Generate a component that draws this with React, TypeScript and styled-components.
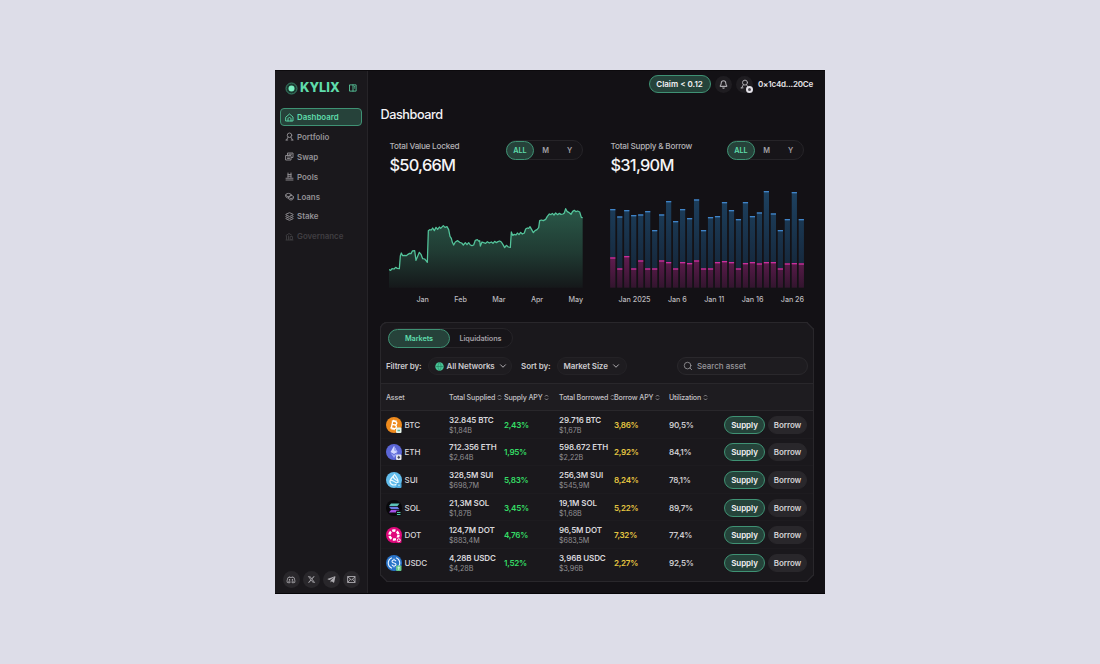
import React from 'react';
import styled, { createGlobalStyle, css } from 'styled-components';
import { Bell, ChevronDown, Layers, Search } from 'lucide-react';
import { RiDiscordLine, RiTwitterXFill } from 'react-icons/ri';
import { FaTelegramPlane } from 'react-icons/fa';

const GlobalStyle = createGlobalStyle`
  * {
    box-sizing: border-box;
  }

  body {
    margin: 0;
    background: #dddde8;
    font-family: Inter, 'Liberation Sans', sans-serif;
    color: #e6e4e8;
  }

  svg {
    display: block;
    flex-shrink: 0;
  }
`;

const Page = styled.div`
  display: flex;
  justify-content: center;
  height: 664px;
  padding-top: 70px;
`;

const Window = styled.div`
  display: flex;
  width: 550px;
  height: 524px;
  background: #131115;
  border-top: 1px solid #0c0a0d;
  border-bottom: 1px solid #060507;
`;

/* ---------- sidebar ---------- */

const Sidebar = styled.aside`
  display: flex;
  flex-direction: column;
  width: 93px;
  padding: 8px 5px 5px;
  background: #1a181c;
  border-right: 1px solid #262428;
`;

const Brand = styled.div`
  display: flex;
  align-items: center;
  height: 18px;
  padding-left: 5px;
  color: #5fdcab;

  svg:last-child {
    margin-left: 9px;
  }
`;

const BrandName = styled.span`
  width: 40px;
  margin-left: 2px;
  font-size: 12.8px;
  font-weight: 800;
  line-height: 18px;
`;

const Nav = styled.nav`
  display: flex;
  flex-direction: column;
  gap: 1.9px;
  margin-top: 11px;
`;

const NavLink = styled.a<{ $active?: boolean; $disabled?: boolean }>`
  display: flex;
  align-items: center;
  gap: 3px;
  width: 82px;
  height: 18px;
  padding-left: 4px;
  border: 1px solid transparent;
  border-radius: 4px;
  font-size: 7.9px;
  font-weight: 600;
  color: #949296;
  ${({ $disabled }) =>
    $disabled &&
    css`
      color: #403e42;
    `}
  ${({ $active }) =>
    $active &&
    css`
      background: #26423a;
      border-color: #3f9274;
      color: #5fdcab;
    `}
`;

const Socials = styled.div`
  display: flex;
  gap: 3px;
  margin-top: auto;
  padding-left: 2.5px;
`;

const RoundButton = styled.button`
  display: flex;
  align-items: center;
  justify-content: center;
  position: relative;
  width: 17px;
  height: 17px;
  padding: 0;
  border: 0;
  border-radius: 50%;
  background: #29272b;
  color: #aeacb1;
`;

/* ---------- main ---------- */

const Main = styled.main`
  flex: 1;
  padding: 0 11px 0 12px;
`;

const TopBar = styled.header`
  display: flex;
  align-items: center;
  justify-content: flex-end;
  height: 26px;
  padding-right: 1px;

  ${RoundButton} {
    background: #1f1d21;
  }
`;

const ClaimButton = styled.button`
  width: 62px;
  height: 18px;
  margin-right: 4.5px;
  padding: 0;
  border: 1px solid #3f9274;
  border-radius: 9px;
  background: #25433a;
  color: #f2f1f3;
  font: 600 8px Inter, sans-serif;
`;

const Wallet = styled.div`
  display: flex;
  align-items: center;
  gap: 5px;
  margin-left: 4px;
  font-size: 8px;
  font-weight: 600;
  letter-spacing: -0.2px;
`;

const Badge = styled.span`
  position: absolute;
  right: 0;
  bottom: 0;
  width: 7px;
  height: 7px;
  border: 2.5px solid #e4e2e8;
  border-radius: 50%;
  background: #4c4a50;
`;

const Title = styled.h1`
  height: 33px;
  margin: 0;
  padding-left: 0.5px;
  font-size: 12.7px;
  font-weight: 500;
  line-height: 36px;
  letter-spacing: -0.45px;
  color: #f4f3f5;
`;

const Stats = styled.section`
  display: flex;
  gap: 27px;
  padding: 0 9px;
`;

const StatCard = styled.article`
  width: 194px;
  height: 192px;
  padding-top: 10px;
`;

const StatHead = styled.div`
  display: flex;
  justify-content: space-between;
  height: 47px;
`;

const StatLabel = styled.div`
  padding-left: 0.5px;
  font-size: 8.2px;
  font-weight: 500;
  line-height: 13px;
  letter-spacing: -0.23px;
  color: #b3b1b5;
`;

const StatValue = styled.div`
  padding-left: 0.5px;
  font-size: 16.4px;
  font-weight: 500;
  line-height: 25px;
  letter-spacing: -0.75px;
  color: #f6f5f7;
`;

const Segmented = styled.div`
  display: flex;
  align-items: center;
  height: 20px;
  border: 1px solid #262428;
  border-radius: 10px;
  background: #171519;
`;

const Segment = styled.button<{ $active?: boolean; $width: number }>`
  width: ${({ $width }) => $width}px;
  height: 19px;
  margin: -1px 0;
  padding: 0;
  border: 1px solid transparent;
  border-radius: 10px;
  background: none;
  color: #a19fa3;
  font: 600 7.3px Inter, sans-serif;
  letter-spacing: -0.1px;
  ${({ $active }) =>
    $active &&
    css`
      margin-left: -1px;
      background: #26423a;
      border-color: #3f9274;
      color: #5fdcab;
    `}
`;

const Axis = styled.div<{ $inset: number }>`
  display: flex;
  justify-content: space-between;
  padding-left: ${({ $inset }) => $inset}px;
  font-size: 7.2px;
  font-weight: 500;
  line-height: 23px;
  letter-spacing: -0.05px;
  color: #bbb9bd;
`;

/* ---------- markets ---------- */

const Panel = styled.section`
  height: 260px;
  border: 1px solid #29272b;
  border-radius: 7px;
  corner-shape: round bevel bevel bevel;
  background: #1a181c;
`;

const Tabs = styled(Segmented)`
  width: 125px;
  margin: 5px 0 0 7px;
`;

const Filters = styled.div`
  display: flex;
  align-items: center;
  height: 36px;
  padding: 0 5px;
  font-size: 8px;
  font-weight: 600;
  letter-spacing: -0.12px;
  color: #cbc9cd;
`;

const Select = styled.div<{ $width: number }>`
  display: flex;
  align-items: center;
  gap: 3px;
  width: ${({ $width }) => $width}px;
  height: 18px;
  padding-left: 5.5px;
  border: 1px solid #242226;
  border-radius: 9px;
  background: #1e1c20;
  margin: 0 9px 0 6.5px;
`;

const SearchBox = styled.label`
  display: flex;
  align-items: center;
  gap: 4px;
  width: 131px;
  height: 18px;
  margin-left: auto;
  padding-left: 5px;
  border: 1px solid #2a282c;
  border-radius: 9px;
  background: #1e1c20;
  color: #98969a;
  font-weight: 500;
  letter-spacing: -0.05px;
`;

const rowGrid = css`
  display: grid;
  grid-template-columns: 63px 55px 55px 55px 55px 55px 1fr;
  align-items: center;
  padding-left: 5px;
`;

const HeadRow = styled.div`
  ${rowGrid}
  height: 28px;
  margin-top: -1px;
  border-top: 1px solid #29272b;
  border-bottom: 1px solid #29272b;
  background: #1e1c20;
  font-size: 7.1px;
  font-weight: 500;
  letter-spacing: -0.15px;
  color: #c3c1c5;
`;

const HeadCell = styled.div`
  display: flex;
  align-items: center;
  gap: 1.5px;
  white-space: nowrap;
`;

const Row = styled.div`
  ${rowGrid}
  height: 27.55px;
  padding-top: 1.2px;
  border-bottom: 1px solid #1d1b1f;

  &:last-child {
    border-bottom-color: transparent;
  }
`;

const Asset = styled.div`
  display: flex;
  align-items: center;
  gap: 2.5px;
  font-size: 8.1px;
  font-weight: 500;
  letter-spacing: -0.1px;
  color: #d8d6da;
`;

const Amount = styled.div`
  padding-top: 1px;
  font-size: 8px;
  font-weight: 600;
  line-height: 11px;
  letter-spacing: -0.1px;
  white-space: nowrap;
  color: #d8d6da;
`;

const Sub = styled.div`
  font-size: 7.2px;
  font-weight: 400;
  line-height: 10px;
  letter-spacing: -0.05px;
  color: #939195;
`;

const Percent = styled.div<{ $color?: string }>`
  font-size: 8.1px;
  font-weight: 600;
  letter-spacing: -0.27px;
  color: ${({ $color }) => $color || '#cbc9cd'};
`;

const Actions = styled.div`
  display: flex;
  gap: 3px;
`;

const ActionButton = styled.button<{ $primary?: boolean }>`
  width: ${({ $primary }) => ($primary ? 41 : 39)}px;
  height: 18px;
  padding: 0;
  border: 1px solid ${({ $primary }) => ($primary ? '#3f9274' : '#29272b')};
  border-radius: 9px;
  background: ${({ $primary }) => ($primary ? '#25433a' : '#29272b')};
  color: ${({ $primary }) => ($primary ? '#f2f1f3' : '#d3d1d5')};
  font: 600 8px Inter, sans-serif;
  letter-spacing: -0.05px;
`;

/* ---------- icons ---------- */

const Icon: React.FC<{ children: React.ReactNode; size?: number }> = ({
  children,
  size = 9,
}) => (
  <svg
    width={size}
    height={size}
    viewBox="0 0 18 18"
    fill="none"
    stroke="currentColor"
    strokeWidth="1.8"
    strokeLinejoin="round"
    strokeLinecap="round"
  >
    {children}
  </svg>
);

const LogoMark = () => (
  <svg width="13" height="13" viewBox="0 0 26 26">
    <circle cx="13" cy="13" r="11" fill="#1c3a31" stroke="#3a8168" strokeWidth="2" />
    <circle cx="13" cy="13" r="6" fill="#7af0c2" />
  </svg>
);

const UserIcon = ({ size = 9 }: { size?: number }) => (
  <Icon size={size}>
    <circle cx="9" cy="6.5" r="4.5" />
    <path d="M6.2 10.2 L3 16 M11.8 10.2 L15 16 M2 16 H5.5 M12.5 16 H16" />
  </Icon>
);

const MailIcon = () => (
  <Icon size={9}>
    <path d="M2 3 H16 V15 H2 Z M2 4 L9 10 L16 4 M2 14 L7 8.5 M16 14 L11 8.5" />
  </Icon>
);

const SortIcon = () => (
  <svg width="5" height="7" viewBox="0 0 10 14" fill="none" stroke="#a5a3a7" strokeWidth="1.7">
    <path d="M2 5 L5 2 L8 5 M2 9 L5 12 L8 9" />
  </svg>
);

const GlobeIcon = () => (
  <svg width="9" height="9" viewBox="0 0 18 18">
    <circle cx="9" cy="9" r="8.5" fill="#48c596" />
    <path
      d="M1 9 H17 M9 1 C5 5 5 13 9 17 C13 13 13 5 9 1"
      fill="none"
      stroke="#1f7457"
      strokeWidth="1.1"
    />
  </svg>
);

const navIcons: Record<string, React.ReactNode> = {
  Dashboard: (
    <Icon>
      <path d="M2 8 L9 2 L16 8 V16 H2 Z M6 16 V12 C6 8 12 8 12 12 V16" />
    </Icon>
  ),
  Portfolio: <UserIcon />,
  Swap: (
    <Icon>
      <path d="M5 6 V2 H16 V11 H13 M2 7 H12 V16 H2 Z M5 10 H9 M5 13 H9 M8 4.5 H13" />
    </Icon>
  ),
  Pools: (
    <Icon>
      <path d="M6 11 V2 M12 11 V2 M6 5 H12 M6 8.5 H12 M2 12.5 H16 M2 16 H16" />
    </Icon>
  ),
  Loans: (
    <Icon>
      <ellipse cx="7" cy="6" rx="5.5" ry="3.2" />
      <path d="M1.5 6 V9 C2 11 4 12 6 12 M12.5 7 C19 7 19 13 12 13 C6 13 6 7 12.5 7 M7 11 V13 C8 17 16 17 16.5 13 V10" />
    </Icon>
  ),
  Stake: <Layers size={9} strokeWidth={2.5} />,
  Governance: (
    <Icon>
      <path d="M2 7 L8 3 L13 6 M3 8 V15 M7 8 V15 M2 16 H16 M11 9 H15 V15 H11 Z" />
    </Icon>
  ),
};

const assetMarks: Record<string, React.ReactNode> = {
  BTC: (
    <>
      <circle cx="16" cy="16" r="16" fill="#ee8a1d" />
      <g transform="rotate(12 16 16)" fill="none" stroke="#fff" strokeWidth="2.7">
        <path d="M12 9 V23 M10 9 H17 C22 9 22 15.5 17 15.5 H12 M17 15.5 C23 15.5 23 23 17 23 H10 M14 6 V9 M18 6 V9 M14 23 V26 M18 23 V26" />
      </g>
      <rect x="20" y="21" width="11" height="11" rx="2" fill="#e8f4ea" />
      <path d="M23 27 H28" stroke="#5bb7a0" strokeWidth="3" />
    </>
  ),
  ETH: (
    <>
      <circle cx="16" cy="16" r="16" fill="#5b66d6" />
      <path d="M16 4 L23 16 L16 20 L9 16 Z" fill="#d3d8ff" />
      <path d="M16 4 L23 16 L16 13 Z M9 18 L16 22 L23 18 L16 28 Z" fill="#9aa4f2" />
      <rect x="20" y="21" width="11" height="11" rx="2" fill="#e2e3ee" />
      <path d="M25.5 23 L28.5 27 L25.5 30 L22.5 27 Z" fill="#46495c" />
    </>
  ),
  SUI: (
    <>
      <circle cx="16" cy="16" r="16" fill="#62bdec" />
      <path
        d="M17 5 C22 12 25 15 24 20 C22 28 10 28 8 20 C7 15 12 12 17 5 Z M9 17 C14 15 16 21 23 22 M15 8 C13 14 20 15 23 18"
        fill="none"
        stroke="#e9f8ff"
        strokeWidth="2.4"
      />
      <rect x="21" y="22" width="10" height="10" rx="2" fill="#4da9dd" />
      <path d="M26 24 C30 30 22 30 26 24" fill="#e9f8ff" />
    </>
  ),
  SOL: (
    <>
      <circle cx="16" cy="16" r="16" fill="#09080b" />
      <path d="M10 7 H27 L23 12 H6 Z" fill="#5cc3b9" />
      <path d="M6 13.5 H23 L27 18.5 H10 Z" fill="#6b7be2" />
      <path d="M10 20 H27 L23 25 H6 Z" fill="#a44fe6" />
      <rect x="20" y="21" width="11" height="11" rx="2" fill="#121015" />
      <path d="M22 25 H29 M22 29 H29" stroke="#4fc9a5" strokeWidth="2" />
    </>
  ),
  DOT: (
    <>
      <circle cx="16" cy="16" r="16" fill="#e0087c" />
      <circle
        cx="16"
        cy="16"
        r="9"
        fill="none"
        stroke="#fff"
        strokeWidth="5"
        strokeDasharray="6.6 2.82"
      />
      <rect x="20" y="21" width="11" height="11" rx="2" fill="#e0087c" />
      <circle cx="25.5" cy="26.5" r="3" fill="none" stroke="#fff" strokeWidth="1.8" />
    </>
  ),
  USDC: (
    <>
      <circle cx="16" cy="16" r="16" fill="#2873c8" />
      <path
        d="M12 5.5 C2 10 2 22 12 26.5 M20 5.5 C30 10 30 22 20 26.5 M20 12.5 C19 9 12 9 12 13 C12 17 20 15 20 19 C20 23 12 23 12 19 M16 7.5 V10 M16 22 V24.5"
        fill="none"
        stroke="#e7f2ff"
        strokeWidth="2.3"
      />
      <rect x="20" y="21" width="11" height="11" rx="2" fill="#64c98d" />
      <path d="M25.5 23 V30 M23 25.5 H28" stroke="#dff7e6" strokeWidth="1.6" />
    </>
  ),
};

/* ---------- data ---------- */

const nav = ['Dashboard', 'Portfolio', 'Swap', 'Pools', 'Loans', 'Stake', 'Governance'];

const columns = ['Total Supplied', 'Supply APY', 'Total Borrowed', 'Borrow APY', 'Utilization'];

const markets = [
  ['BTC', '32.845 BTC', '$1,84B', '2,43%', '29.716 BTC', '$1,67B', '3,86%', '90,5%'],
  ['ETH', '712.356 ETH', '$2,64B', '1,95%', '598.672 ETH', '$2,22B', '2,92%', '84,1%'],
  ['SUI', '328,5M SUI', '$698,7M', '5,83%', '256,3M SUI', '$545,9M', '8,24%', '78,1%'],
  ['SOL', '21,3M SOL', '$1,87B', '3,45%', '19,1M SOL', '$1,68B', '5,22%', '89,7%'],
  ['DOT', '124,7M DOT', '$883,4M', '4,76%', '96,5M DOT', '$683,5M', '7,32%', '77,4%'],
  ['USDC', '4,28B USDC', '$4,28B', '1,52%', '3,96B USDC', '$3,96B', '2,27%', '92,5%'],
];

const tvl =
  '0,254 5,256 9,251 15,252 20,247 25,250 31,251 34,213 37,204 41,212 47,211 52,212 57,208 62,205 66,206 70,198 77,197 81,226 86,214 91,202 96,208 101,221 107,222 111,227 115,232 118,137 122,134 127,135 131,129 136,137 141,127 146,133 151,126 155,130 160,125 163,122 168,127 174,125 179,134 183,154 187,160 190,172 194,180 199,171 206,167 212,172 218,174 223,180 229,173 234,179 239,173 244,180 249,182 254,180 259,166 265,164 270,169 272,167 274,183 279,171 284,173 290,175 295,170 301,174 307,171 312,175 317,169 322,173 327,170 332,168 337,171 342,179 347,188 352,181 358,186 364,187 367,141 371,151 376,148 381,150 385,144 390,149 395,142 400,147 406,144 410,132 415,129 419,130 423,125 428,134 433,143 438,137 444,134 449,128 452,107 457,105 463,107 470,103 475,94 481,87 486,89 490,85 495,90 500,84 506,89 511,85 516,88 522,87 526,84 530,71 534,79 539,82 546,88 551,79 556,76 561,80 566,78 572,81 577,97 581,98';

const supply = [
  72, 94, 75, 90, 88, 78, 135, 88, 48, 108, 72, 99, 43, 135, 96, 93, 51, 75, 102, 51, 93, 82,
  18, 85, 135, 102, 21, 102,
];

const borrow = [
  217, 250, 213, 250, 226, 250, 250, 226, 231, 250, 231, 234, 226, 250, 250, 231, 228, 231, 250,
  234, 231, 235, 231, 231, 250, 235, 234, 235,
];

const CHART_BOTTOM = 308;
const BAR_WIDTH = 15.6;

const AreaChart = () => (
  <svg width="194" height="101" viewBox="0 6 582 303">
    <defs>
      <linearGradient id="area" x1="0" y1="0" x2="0" y2="1">
        <stop offset="0" stopColor="#2a5848" />
        <stop offset="0.55" stopColor="#203b33" />
        <stop offset="1" stopColor="#15181a" />
      </linearGradient>
    </defs>
    <polygon points={`0,${CHART_BOTTOM} ${tvl} 581,${CHART_BOTTOM}`} fill="url(#area)" />
    <polyline points={tvl} fill="none" stroke="#54c49b" strokeWidth="3.8" strokeLinejoin="round" />
  </svg>
);

const BarChart = () => (
  <svg width="194" height="101" viewBox="0 6 582 303">
    <defs>
      <linearGradient id="supply" gradientUnits="userSpaceOnUse" x1="0" y1="20" x2="0" y2="250">
        <stop offset="0" stopColor="#1d4160" />
        <stop offset="1" stopColor="#16283c" />
      </linearGradient>
      <linearGradient id="borrow" gradientUnits="userSpaceOnUse" x1="0" y1="215" x2="0" y2="308">
        <stop offset="0" stopColor="#611c50" />
        <stop offset="1" stopColor="#33152e" />
      </linearGradient>
    </defs>
    {supply.map((top, i) => {
      const x = i * 20.95 + 0.5;
      return (
        <g key={i}>
          <rect x={x} y={top} width={BAR_WIDTH} height={borrow[i] - top} fill="url(#supply)" />
          <rect x={x} y={top} width={BAR_WIDTH} height="4" fill="#4084c8" />
          <rect
            x={x}
            y={borrow[i]}
            width={BAR_WIDTH}
            height={CHART_BOTTOM - borrow[i]}
            fill="url(#borrow)"
          />
          <rect x={x} y={borrow[i]} width={BAR_WIDTH} height="4" fill="#cb2f9d" />
        </g>
      );
    })}
  </svg>
);

interface StatProps {
  label: string;
  value: string;
  ticks: string[];
  inset: number;
  children: React.ReactNode;
}

const Stat: React.FC<StatProps> = ({ label, value, ticks, inset, children }) => (
  <StatCard>
    <StatHead>
      <div>
        <StatLabel>{label}</StatLabel>
        <StatValue>{value}</StatValue>
      </div>
      <Segmented>
        <Segment $active $width={28}>ALL</Segment>
        <Segment $width={23}>M</Segment>
        <Segment $width={25}>Y</Segment>
      </Segmented>
    </StatHead>
    {children}
    <Axis $inset={inset}>
      {ticks.map((tick) => (
        <span key={tick}>{tick}</span>
      ))}
    </Axis>
  </StatCard>
);

const App: React.FC = () => (
  <Page>
    <GlobalStyle />
    <Window>
      <Sidebar>
        <Brand>
          <LogoMark />
          <BrandName>KYLIX</BrandName>
          <Icon size={8}>
            <path d="M2 2 H16 V16 H2 Z M9 2 V16 M12 6 H13 M12 9 H13" />
          </Icon>
        </Brand>
        <Nav>
          {nav.map((name) => (
            <NavLink key={name} $active={name === 'Dashboard'} $disabled={name === 'Governance'}>
              {navIcons[name]}
              {name}
            </NavLink>
          ))}
        </Nav>
        <Socials>
          <RoundButton><RiDiscordLine size={10} /></RoundButton>
          <RoundButton><RiTwitterXFill size={9} /></RoundButton>
          <RoundButton><FaTelegramPlane size={9} /></RoundButton>
          <RoundButton><MailIcon /></RoundButton>
        </Socials>
      </Sidebar>
      <Main>
        <TopBar>
          <ClaimButton>Claim &lt; 0.12</ClaimButton>
          <RoundButton><Bell size={9} strokeWidth={2.8} /></RoundButton>
          <Wallet>
            <RoundButton>
              <UserIcon size={10} />
              <Badge />
            </RoundButton>
            0×1c4d...20Ce
          </Wallet>
        </TopBar>
        <Title>Dashboard</Title>
        <Stats>
          <Stat
            label="Total Value Locked"
            value="$50,66M"
            ticks={['Jan', 'Feb', 'Mar', 'Apr', 'May']}
            inset={27.5}
          >
            <AreaChart />
          </Stat>
          <Stat
            label="Total Supply & Borrow"
            value="$31,90M"
            ticks={['Jan 2025', 'Jan 6', 'Jan 11', 'Jan 16', 'Jan 26']}
            inset={8.5}
          >
            <BarChart />
          </Stat>
        </Stats>
        <Panel>
          <Tabs>
            <Segment $active $width={62}>Markets</Segment>
            <Segment $width={61}>Liquidations</Segment>
          </Tabs>
          <Filters>
            Filtrer by:
            <Select $width={84}>
              <GlobeIcon />
              All Networks
              <ChevronDown size={10} />
            </Select>
            Sort by:
            <Select $width={70}>
              Market Size
              <ChevronDown size={10} />
            </Select>
            <SearchBox>
              <Search size={10} />
              Search asset
            </SearchBox>
          </Filters>
          <HeadRow>
            <HeadCell>Asset</HeadCell>
            {columns.map((name) => (
              <HeadCell key={name}>
                {name}
                <SortIcon />
              </HeadCell>
            ))}
          </HeadRow>
          {markets.map(([asset, supplied, supplied$, supplyApy, borrowed, borrowed$, borrowApy, used]) => (
            <Row key={asset}>
              <Asset>
                <svg width="16" height="16" viewBox="0 0 32 32">
                  {assetMarks[asset]}
                </svg>
                {asset}
              </Asset>
              <Amount>
                {supplied}
                <Sub>{supplied$}</Sub>
              </Amount>
              <Percent $color="#35dc65">{supplyApy}</Percent>
              <Amount>
                {borrowed}
                <Sub>{borrowed$}</Sub>
              </Amount>
              <Percent $color="#e4c441">{borrowApy}</Percent>
              <Percent>{used}</Percent>
              <Actions>
                <ActionButton $primary>Supply</ActionButton>
                <ActionButton>Borrow</ActionButton>
              </Actions>
            </Row>
          ))}
        </Panel>
      </Main>
    </Window>
  </Page>
);

export default App;
